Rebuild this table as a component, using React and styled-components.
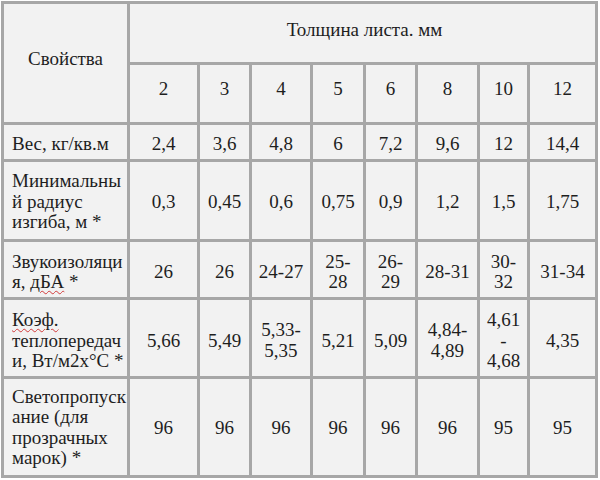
import React from "react";
import styled, { createGlobalStyle } from "styled-components";

const Global = createGlobalStyle`
  html, body { margin: 0; padding: 0; background: #ffffff; }
`;

const Table = styled.div`
  margin: 1px 0 0 1px;
  display: grid;
  width: max-content;
  grid-template-columns: 123px 67px 49px 58px 50px 49px 59px 47px 65px;
  grid-template-rows: 58px 57px 34px 77px 55px 76px 96px;
  gap: 3px;
  padding: 3px;
  background: #a7a7a7;
  color: #1e1e1e;
  font-family: "Liberation Serif", "Times New Roman", serif;
  font-size: 19px;
  line-height: 20.5px;
`;

const pad = (s) =>
  s >= 0 ? `padding-top: ${2 * s}px;` : `padding-bottom: ${-2 * s}px;`;

const Cell = styled.div`
  background: #f2f2f2;
  display: flex;
  flex-direction: column;
  justify-content: center;
  white-space: nowrap;
  box-sizing: border-box;
  ${(p) => pad(p.$shift || 0)}
`;

const CornerCell = styled(Cell)`
  grid-row: 1 / span 2;
  align-items: center;
`;

const SpanHead = styled(Cell)`
  grid-column: 2 / span 8;
  align-items: center;
  padding-left: 4px;
`;

const NumCell = styled(Cell)`
  align-items: center;
  text-align: center;
`;

const LabelCell = styled(Cell)`
  align-items: flex-start;
  padding-left: 8px;
`;

const Spell = styled.span`
  text-decoration: underline wavy #d23a3a;
  text-decoration-thickness: 1px;
  text-underline-offset: 2px;
`;

const thick = ["2", "3", "4", "5", "6", "8", "10", "12"];

const rows = [
  {
    shift: 2.25,
    label: ["Вес, кг/кв.м"],
    values: ["2,4", "3,6", "4,8", "6", "7,2", "9,6", "12", "14,4"].map((v) => [v]),
  },
  {
    shift: 1.5,
    label: ["Минимальны", "й радиус", "изгиба, м *"],
    values: ["0,3", "0,45", "0,6", "0,75", "0,9", "1,2", "1,5", "1,75"].map((v) => [v]),
  },
  {
    shift: 2.75,
    label: [
      "Звукоизоляци",
      <>я, <Spell>дБА</Spell> *</>,
    ],
    values: [
      ["26"],
      ["26"],
      ["24-27"],
      ["25-", "28"],
      ["26-", "29"],
      ["28-31"],
      ["30-", "32"],
      ["31-34"],
    ],
  },
  {
    shift: 2.75,
    label: [<Spell>Коэф.</Spell>, "теплопередач", "и, Вт/м2х°С *"],
    values: [
      ["5,66"],
      ["5,49"],
      ["5,33-", "5,35"],
      ["5,21"],
      ["5,09"],
      ["4,84-", "4,89"],
      ["4,61", "-", "4,68"],
      ["4,35"],
    ],
  },
  {
    shift: 0.75,
    label: ["Светопропуск", "ание (для", "прозрачных", "марок) *"],
    values: ["96", "96", "96", "96", "96", "96", "95", "95"].map((v) => [v]),
  },
];

const Lines = ({ lines }) =>
  lines.map((l, i) => (
    <React.Fragment key={i}>
      {i > 0 && <br />}
      {l}
    </React.Fragment>
  ));

export default function App() {
  return (
    <>
      <Global />
      <Table>
        <CornerCell $shift={-4}>Свойства</CornerCell>
        <SpanHead $shift={-3.25}>Толщина листа. мм</SpanHead>
        {thick.map((t) => (
          <NumCell key={t} $shift={-4.25}>
            {t}
          </NumCell>
        ))}
        {rows.map((r, ri) => (
          <React.Fragment key={ri}>
            <LabelCell $shift={r.shift}>
              <div>
                <Lines lines={r.label} />
              </div>
            </LabelCell>
            {r.values.map((v, vi) => (
              <NumCell key={vi} $shift={r.shift}>
                <div>
                  <Lines lines={v} />
                </div>
              </NumCell>
            ))}
          </React.Fragment>
        ))}
      </Table>
    </>
  );
}
